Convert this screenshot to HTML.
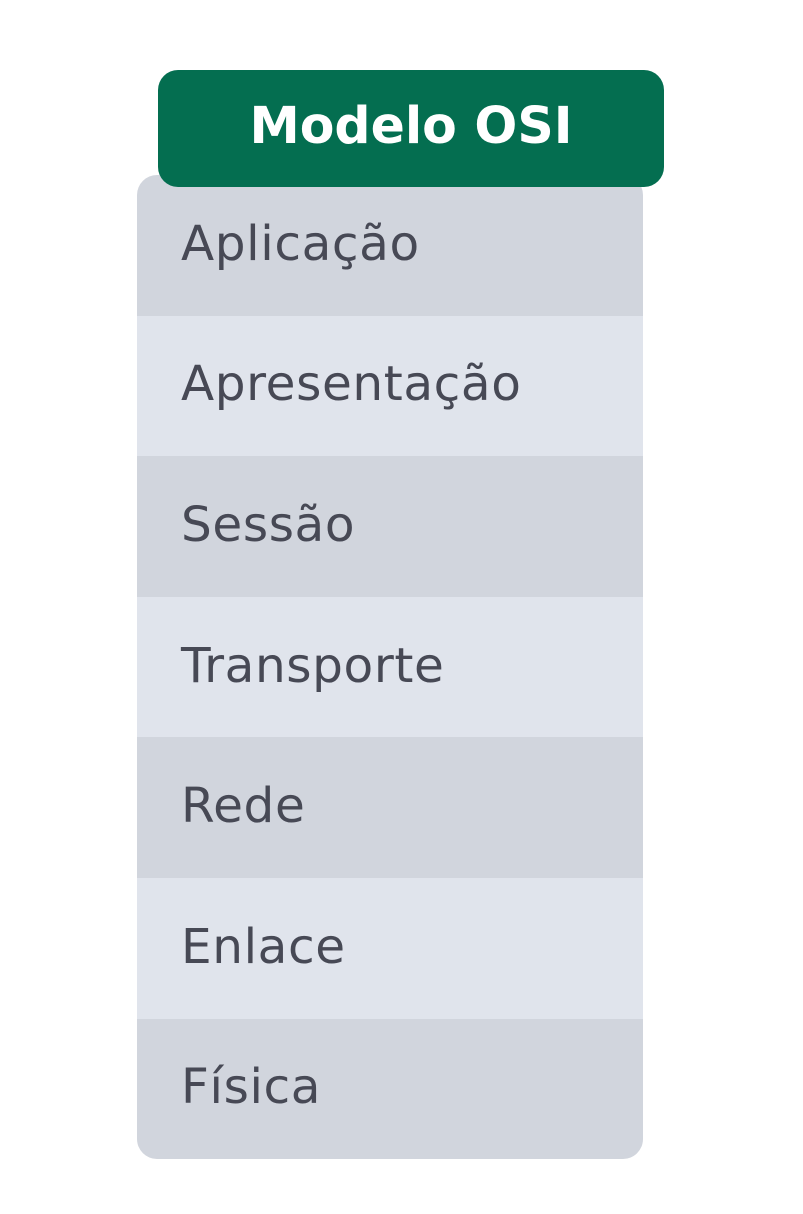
<!DOCTYPE html>
<html><head><meta charset="utf-8"><style>
body{margin:0;width:803px;height:1214px;background:#fff;position:relative;font-family:"DejaVu Sans","Liberation Sans",sans-serif;}
.list{position:absolute;left:137px;top:175px;width:506px;height:984px;border-radius:20px;overflow:hidden;}
.row{height:140.6px;display:flex;align-items:center;padding-left:44px;padding-bottom:3px;font-size:48.5px;letter-spacing:0.6px;color:#474955;box-sizing:border-box;}
.d{background:#d1d5dd}.l{background:#e0e4ec}
.hd{position:absolute;left:158px;top:70px;width:506px;height:117px;border-radius:20px;background:#046e50;color:#fff;font-weight:bold;font-size:50.5px;display:flex;align-items:center;justify-content:center;padding-bottom:6px;box-sizing:border-box;}
</style></head><body>
<div class="list">
<div class="row d">Aplicação</div>
<div class="row l">Apresentação</div>
<div class="row d">Sessão</div>
<div class="row l">Transporte</div>
<div class="row d">Rede</div>
<div class="row l">Enlace</div>
<div class="row d">Física</div>
</div>
<div class="hd">Modelo OSI</div>
</body></html>
